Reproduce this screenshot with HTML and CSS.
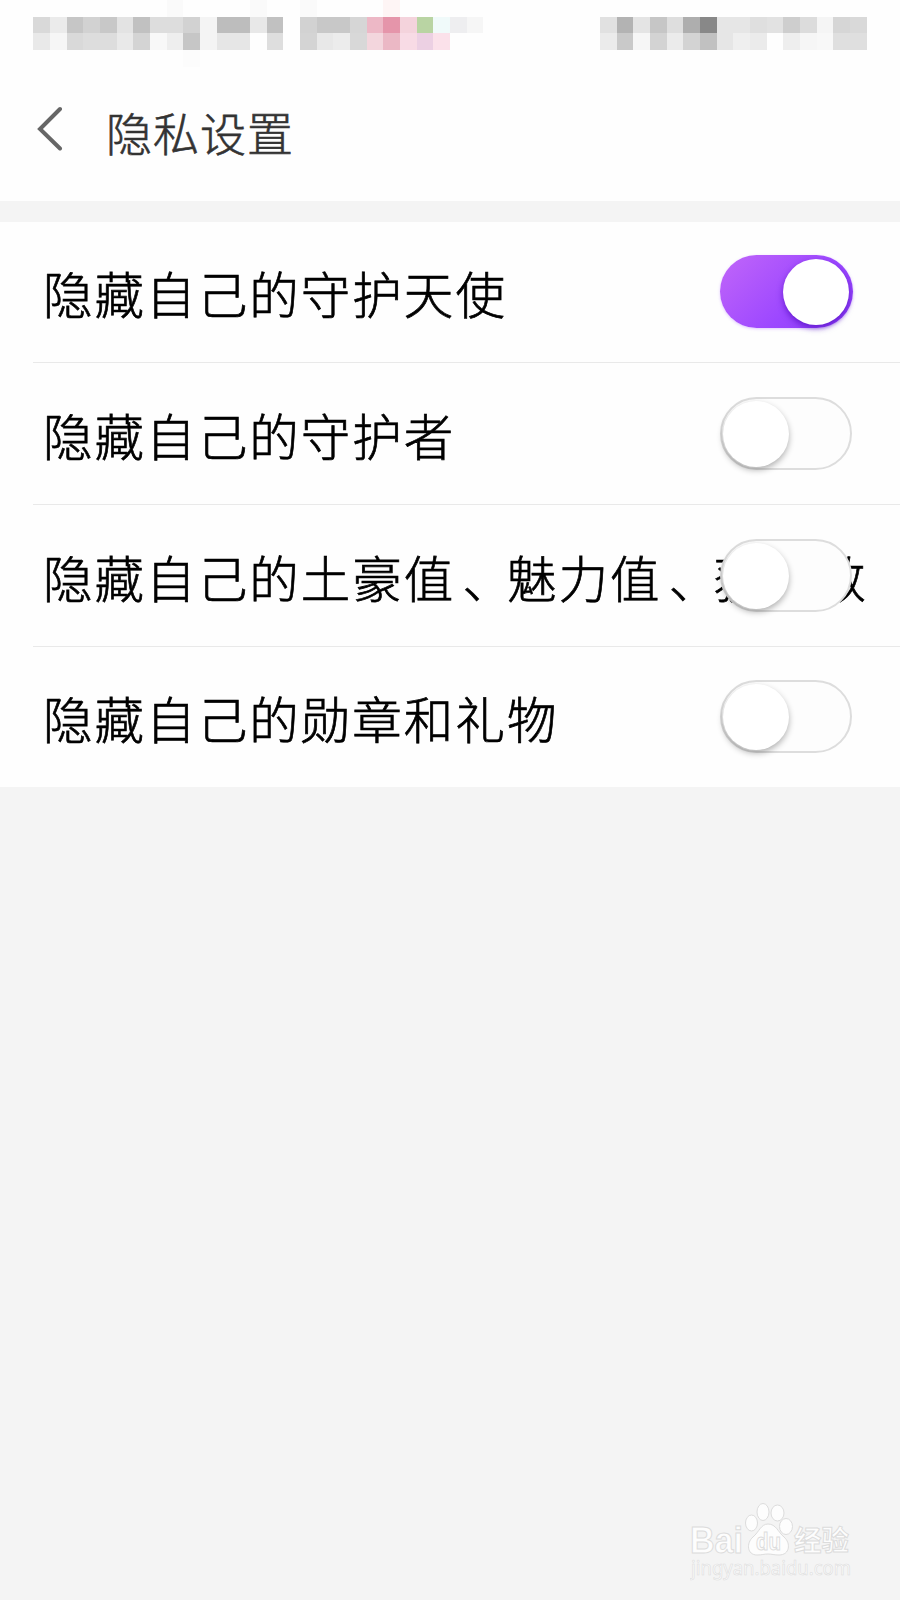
FILE: index.html
```
<!doctype html>
<html lang="zh-CN">
    <head>
        <meta charset="utf-8">
        <title>隐私设置</title>
        <link rel="stylesheet" href="styles.css">
    </head>
    <body>
        <div class="pantalla">
            <header class="cabecera">
                <!-- status bar, one unit per block -->
                <svg class="estado" viewBox="0 0 54 4" shape-rendering="crispEdges">
                    <g fill="#fafafa">
                        <rect x="10" y="0" width="1" height="1"/><rect x="15" y="0" width="1" height="1"/><rect x="18" y="0" width="1" height="1"/>
                        <rect x="11" y="3" width="1" height="1" fill="#fcfcfc"/><rect x="23" y="0" width="1" height="1" fill="#fef5f5"/>
                    </g>
                    <g>
                        <rect x="2" y="1" width="1" height="1" fill="#d9d9d9"/><rect x="3" y="1" width="1" height="1" fill="#ebebeb"/>
                        <rect x="4" y="1" width="1" height="1" fill="#c6c6c6"/><rect x="5" y="1" width="1" height="1" fill="#d2d2d2"/>
                        <rect x="6" y="1" width="1" height="1" fill="#c8c8c8"/><rect x="7" y="1" width="1" height="1" fill="#e3e3e3"/>
                        <rect x="8" y="1" width="1" height="1" fill="#c1c1c1"/><rect x="9" y="1" width="2" height="1" fill="#dddddd"/>
                        <rect x="11" y="1" width="1" height="1" fill="#d2d2d2"/><rect x="12" y="1" width="1" height="1" fill="#f4f4f4"/>
                        <rect x="13" y="1" width="2" height="1" fill="#bdbdbd"/><rect x="15" y="1" width="1" height="1" fill="#e8e8e8"/>
                        <rect x="16" y="1" width="1" height="1" fill="#c1c1c1"/><rect x="18" y="1" width="1" height="1" fill="#d2d2d2"/>
                        <rect x="19" y="1" width="2" height="1" fill="#c8c8c8"/><rect x="21" y="1" width="1" height="1" fill="#d6d6d6"/>
                        <rect x="22" y="1" width="1" height="1" fill="#edb8c6"/><rect x="23" y="1" width="1" height="1" fill="#e595aa"/>
                        <rect x="24" y="1" width="1" height="1" fill="#f4d3dc"/><rect x="25" y="1" width="1" height="1" fill="#b9d4a3"/>
                        <rect x="26" y="1" width="1" height="1" fill="#f0fafa"/><rect x="27" y="1" width="1" height="1" fill="#eeeef0"/>
                        <rect x="28" y="1" width="1" height="1" fill="#f6f6f6"/>
                    </g>
                    <g>
                        <rect x="2" y="2" width="1" height="1" fill="#e9e9e9"/><rect x="3" y="2" width="1" height="1" fill="#f6f6f6"/>
                        <rect x="4" y="2" width="1" height="1" fill="#d9d9d9"/><rect x="5" y="2" width="2" height="1" fill="#dddddd"/>
                        <rect x="7" y="2" width="1" height="1" fill="#e9e9e9"/><rect x="8" y="2" width="1" height="1" fill="#d4d4d4"/>
                        <rect x="9" y="2" width="1" height="1" fill="#f8f8f8"/><rect x="10" y="2" width="1" height="1" fill="#eeeeee"/>
                        <rect x="11" y="2" width="1" height="1" fill="#c6c6c6"/><rect x="12" y="2" width="1" height="1" fill="#f4f4f4"/>
                        <rect x="13" y="2" width="2" height="1" fill="#e6e6e6"/><rect x="16" y="2" width="1" height="1" fill="#dedede"/>
                        <rect x="18" y="2" width="1" height="1" fill="#d4d4d4"/><rect x="19" y="2" width="1" height="1" fill="#e8e8e8"/>
                        <rect x="20" y="2" width="1" height="1" fill="#ececec"/><rect x="21" y="2" width="1" height="1" fill="#d8d8d8"/>
                        <rect x="22" y="2" width="1" height="1" fill="#f3d6dd"/><rect x="23" y="2" width="1" height="1" fill="#ebb8c5"/>
                        <rect x="24" y="2" width="1" height="1" fill="#f8dbe5"/><rect x="25" y="2" width="1" height="1" fill="#ecd0e3"/>
                        <rect x="26" y="2" width="1" height="1" fill="#fbe1ea"/>
                    </g>
                    <g>
                        <rect x="36" y="1" width="1" height="1" fill="#e1e1e1"/><rect x="37" y="1" width="1" height="1" fill="#b3b3b3"/>
                        <rect x="38" y="1" width="1" height="1" fill="#e4e4e4"/><rect x="39" y="1" width="1" height="1" fill="#c6c6c6"/>
                        <rect x="40" y="1" width="1" height="1" fill="#dedede"/><rect x="41" y="1" width="1" height="1" fill="#aeaeae"/>
                        <rect x="42" y="1" width="1" height="1" fill="#888888"/><rect x="43" y="1" width="2" height="1" fill="#e6e6e6"/>
                        <rect x="45" y="1" width="1" height="1" fill="#dfdfdf"/><rect x="46" y="1" width="1" height="1" fill="#e2e2e2"/>
                        <rect x="47" y="1" width="1" height="1" fill="#cecece"/><rect x="48" y="1" width="1" height="1" fill="#dcdcdc"/>
                        <rect x="49" y="1" width="1" height="1" fill="#f5f5f5"/><rect x="50" y="1" width="1" height="1" fill="#d6d6d6"/>
                        <rect x="51" y="1" width="1" height="1" fill="#d9d9d9"/>
                        <rect x="36" y="2" width="1" height="1" fill="#ebebeb"/><rect x="37" y="2" width="1" height="1" fill="#c9c9c9"/>
                        <rect x="38" y="2" width="1" height="1" fill="#f6f6f6"/><rect x="39" y="2" width="1" height="1" fill="#d3d3d3"/>
                        <rect x="40" y="2" width="1" height="1" fill="#ebebeb"/><rect x="41" y="2" width="1" height="1" fill="#d3d3d3"/>
                        <rect x="42" y="2" width="1" height="1" fill="#c1c1c1"/><rect x="43" y="2" width="1" height="1" fill="#e6e6e6"/>
                        <rect x="44" y="2" width="1" height="1" fill="#efefef"/><rect x="45" y="2" width="1" height="1" fill="#ebebeb"/>
                        <rect x="47" y="2" width="1" height="1" fill="#eeeeee"/><rect x="48" y="2" width="1" height="1" fill="#f6f6f6"/>
                        <rect x="49" y="2" width="1" height="1" fill="#f8f8f8"/><rect x="50" y="2" width="2" height="1" fill="#dfdfdf"/>
                    </g>
                </svg>
                <div class="barra">
                    <svg class="volver" viewBox="0 0 26 46"><path d="M23 4 L3 24 L23 43.500"/></svg>
                    <h1 class="titulo">隐私设置</h1>
                </div>
            </header>

            <main class="lista">
                <div class="fila">
                    <span class="texto">隐藏自己的守护天使</span>
                    <span class="interruptor activo"></span>
                </div>
                <div class="fila">
                    <span class="texto">隐藏自己的守护者</span>
                    <span class="interruptor"></span>
                </div>
                <div class="fila">
                    <span class="texto">隐藏自己的土豪值<span class="coma">、</span>魅力值<span class="coma">、</span>获赞数</span>
                    <span class="interruptor"></span>
                </div>
                <div class="fila">
                    <span class="texto">隐藏自己的勋章和礼物</span>
                    <span class="interruptor"></span>
                </div>
            </main>

            <!-- watermark -->
            <svg class="marca" viewBox="0 0 170 90">
                <g class="marca-logo">
                    <text class="marca-bai" x="0" y="53" textLength="53" lengthAdjust="spacingAndGlyphs">Bai</text>
                    <ellipse cx="61.500" cy="23" rx="6" ry="8"/>
                    <ellipse cx="73" cy="12" rx="6" ry="8.500"/>
                    <ellipse cx="87.500" cy="13" rx="6.500" ry="8"/>
                    <ellipse cx="96" cy="26.500" rx="6.500" ry="8"/>
                    <path d="M78 24 C86 24 88 32 94 37 C101 43 100 55 89 55 C84 55 82 54 78 54 C74 54 72 55 67 55 C57 55 56 43 63 37 C69 32 71 24 78 24 Z"/>
                    <text class="marca-du" x="66" y="50" textLength="25" lengthAdjust="spacingAndGlyphs">du</text>
                    <text class="marca-jingyan" x="104" y="51" textLength="55" lengthAdjust="spacingAndGlyphs">经验</text>
                </g>
                <text class="marca-url" x="1" y="75" textLength="160" lengthAdjust="spacingAndGlyphs">jingyan.baidu.com</text>
            </svg>
        </div>
    </body>
</html>
```
FILE: styles.css
```
body {
    margin:0;
    background:#F4F4F4;
    font-family:"Noto Sans CJK SC", sans-serif;
}
.pantalla {
    position:relative;
    width:900px;
    height:1600px;
    overflow:hidden;
}

/* Header */
.cabecera {
    height:201px;
    background:#FEFEFE;
}
.estado {
    display:block;
    width:900px;
    height:66.67px;
}
.barra {
    display:flex;
    align-items:flex-start;
    padding:38px 0 0 37px;
}
.volver {
    width:26px;
    height:46px;
    fill:none;
    stroke:#666;
    stroke-width:4;
    stroke-linecap:round;
}
.titulo {
    margin:-2px 0 0 43px;
    color:#333;
    font-size:46px;
    font-weight:300;
    line-height:56px;
    letter-spacing:1px;
    -webkit-text-stroke:0.6px #333;
}

/* Rows */
.lista {
    margin-top:21px;
    background:#FEFEFE;
}
.fila {
    position:relative;
    display:flex;
    align-items:flex-end;
    box-sizing:border-box;
    height:142px;
    padding:0 0 34px 43px;
}
.fila:first-child        { height:140px; }
.fila:last-child         { height:141px; }
.fila + .fila::before {
    content:"";
    position:absolute;
    top:0;
    left:33px;
    right:0;
    height:1px;
    background:#E9E9E9;
}
.texto {
    color:#000;
    font-size:49.5px;
    font-weight:300;
    line-height:71px;
    letter-spacing:2.05px;
    white-space:nowrap;
    -webkit-text-stroke:0.7px #000;
}
/* Same advance, the comma only sits nearer to the middle */
.coma {
    margin-left:7px;
    margin-right:-7px;
}

/* The switch goes over the text when the text is too long */
.interruptor {
    position:absolute;
    bottom:34px;
    left:720px;
    box-sizing:border-box;
    width:132px;
    height:73px;
    border:2px solid #DDD;
    border-radius:37px;
    background:#FDFDFD;
}
.interruptor::after {
    content:"";
    position:absolute;
    top:2px;
    left:1px;
    width:66px;
    height:66px;
    border-radius:50%;
    background:#FFF;
    box-shadow:0 3px 6px rgba(0,0,0,0.3);
}
.interruptor.activo {
    width:133px;
    border:0;
    background:linear-gradient(135deg, #BB61FA 10%, #9C47FF 60%, #8A3CF5);
    box-shadow:0 1px 3px rgba(150,70,255,0.3);
}
.interruptor.activo::after {
    top:4px;
    left:63px;
    box-shadow:0 3px 6px rgba(70,0,180,0.6);
}

/* Watermark */
.marca {
    position:absolute;
    left:690px;
    top:1500px;
    width:170px;
    height:90px;
}
.marca-logo {
    fill:#FDFDFD;
    stroke:#DCDCDC;
    stroke-width:1;
}
.marca-bai {
    font:bold 36px "Liberation Sans", sans-serif;
}
.marca-du {
    font:bold 24px "Liberation Sans", sans-serif;
}
.marca-jingyan {
    font:bold 28px "Noto Sans CJK SC", sans-serif;
}
.marca-url {
    font:20px "Noto Sans", sans-serif;
    fill:#FBFBFB;
    stroke:#DCDCDC;
    stroke-width:0.6;
}
```
